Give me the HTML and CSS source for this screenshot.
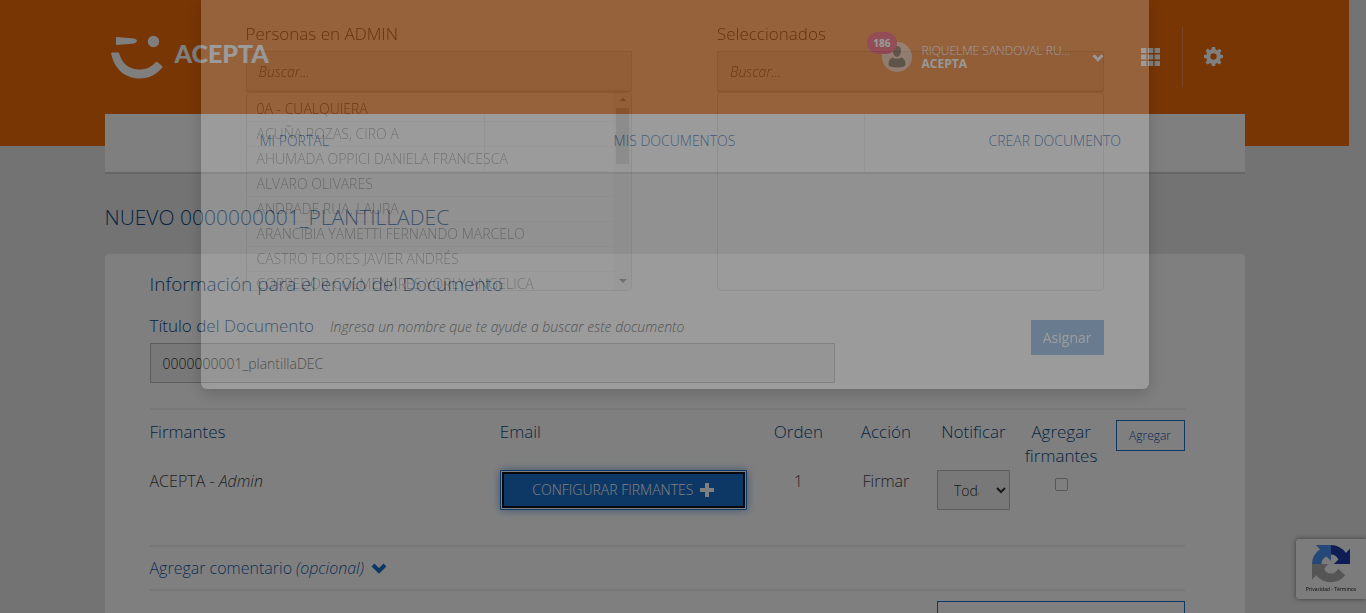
FILE: index.html
```html
<!DOCTYPE html>
<html lang="es">
<head>
<meta charset="utf-8">
<meta name="viewport" content="width=device-width, initial-scale=1">
<title>Nuevo documento - Acepta</title>
<link rel="stylesheet" href="styles.css">
</head>
<body>
<div class="page">
  <header class="banner">
    <div class="container banner-row">
      <a class="logo" href="#">
        <svg class="logo-mark" viewBox="0 0 52 44" aria-hidden="true">
          <path d="M6 2 Q5 2 5 3 V9 Q5 10 6 10 L23 8.400 Q26 7.500 26 6 Q26 4.200 23 3.500 Z"/>
          <circle cx="42.500" cy="6.500" r="5.700"/>
          <path d="M1 17.500 H7 Q8 17.500 8.200 18.600 C11 28.500 18 34.500 28 34.500 C35.500 34.500 40.500 31.600 44.400 27.400 Q45.500 26.300 46.700 27.300 L51 31 Q52 32 51 33 C45 39.700 38 43.500 29 43.500 C14 43.500 3.500 34 .2 19 Q0 17.500 1 17.500Z"/>
        </svg>
        <span>ACEPTA</span>
      </a>
      <div class="user">
        <div class="avatar">
          <svg viewBox="0 0 30 30" aria-hidden="true"><circle class="avatar-bg" cx="15" cy="15" r="15"/><path class="avatar-person" d="M15 4c2.800 0 4.200 2 4 5-.2 3-1.500 5.800-4 5.800S11.200 12 11 9c-.2-3 1.200-5 4-5zM10.500 15.500Q15 18 19.500 15.500 23.500 17 23.500 22.500 23.500 25.500 15 25.500 6.500 25.500 6.500 22.500 6.500 17 10.500 15.500z"/></svg>
          <span class="badge">186</span>
        </div>
        <div class="user-text"><div class="user-name">RIQUELME SANDOVAL RU...</div><div class="user-org">ACEPTA</div></div>
        <button class="icon-button user-toggle" aria-label="Menú de usuario"><svg viewBox="0 0 12 8"><path d="M1.500 1.200 6 5.700 10.500 1.200" fill="none" stroke="currentColor" stroke-width="3"/></svg></button>
      </div>
      <button class="icon-button apps" aria-label="Aplicaciones"><svg viewBox="0 0 19 18"><path fill="currentColor" d="M0 0h5.400v5H0zM6.800 0h5.400v5H6.800zM13.600 0H19v5h-5.400zM0 6.500h5.400v5H0zM6.800 6.500h5.400v5H6.800zM13.600 6.500H19v5h-5.400zM0 13h5.400v5H0zM6.800 13h5.400v5H6.800zM13.600 13H19v5h-5.400z"/></svg></button>
      <button class="icon-button settings" aria-label="Configuración"><svg viewBox="0 0 24 24"><path fill="currentColor" fill-rule="evenodd" d="M10 0h4l.7 3.400 2 .8L19.600 2.200l2.600 2.600-2 2.800.9 2.100L24.200 10v4l-3.200.6-.9 2 1.900 2.900-2.600 2.600-2.800-1.900-2 .9L14 24.200h-4l-.6-3.100-2-.9-2.900 1.900-2.600-2.600 1.900-2.900-.8-2L0 14v-4l3.100-.5.8-2L2 4.600 4.600 2l2.800 2 2-.8zM12 8a4 4 0 1 0 0 8 4 4 0 0 0 0-8z"/></svg></button>
    </div>
  </header>
  <main class="container">
    <nav class="main-nav">
      <a href="#">MI PORTAL</a><a href="#">MIS DOCUMENTOS</a><a href="#">CREAR DOCUMENTO</a>
    </nav>
    <h1>NUEVO 0000000001_PLANTILLADEC</h1>
    <form class="card">
      <h2>Información para el envío del Documento</h2>
      <div class="title-label"><label for="doc-title">Título del Documento</label><em>Ingresa un nombre que te ayude a buscar este documento</em></div>
      <input class="field doc-title" id="doc-title" type="text" value="0000000001_plantillaDEC">
      <section class="signers">
        <table>
          <colgroup><col class="col-name"><col class="col-email"><col><col><col><col><col></colgroup>
          <thead><tr><th class="left">Firmantes</th><th class="left">Email</th><th>Orden</th><th>Acción</th><th>Notificar</th><th id="add-head">Agregar firmantes</th><th><button type="button" class="add-button">Agregar</button></th></tr></thead>
          <tbody><tr><td class="left">ACEPTA - <em>Admin</em></td><td class="left"><button type="button" class="configure">CONFIGURAR FIRMANTES <svg viewBox="0 0 14 14" aria-hidden="true"><path fill="currentColor" d="M5 0h4v5h5v4H9v5H5V9H0V5h5z"/></svg></button></td><td>1</td><td>Firmar</td><td><select class="field notify" aria-label="Notificar"><option>Todas</option></select></td><td><input class="check" type="checkbox" aria-labelledby="add-head"></td><td></td></tr></tbody>
        </table>
      </section>
      <a class="comment" href="#">Agregar comentario <em>(opcional)</em><svg viewBox="0 0 16 11" aria-hidden="true"><path d="M2 2 8 8 14 2" fill="none" stroke="currentColor" stroke-width="4"/></svg></a>
      <div class="actions"><button type="button" class="outline-button" aria-label="Continuar"></button></div>
    </form>
  </main>
</div>
<aside class="captcha">
  <svg viewBox="0 0 64 64" aria-hidden="true">
    <path fill="#1c3aa9" d="M64 32V6.500l-7 7A31.500 31.500 0 0 0 32 0v16c6 0 9.500 2.500 12.500 8.500L37 32z"/>
    <path fill="#4a90f0" d="M32 0H6.500l7 7A31.500 31.500 0 0 0 0 32h16c0-6 2.500-9.500 8.500-12.500L32 27z"/>
    <path fill="#ababab" d="M0 32v26l7-7a31.500 31.500 0 0 0 49 0L44 40c-3 5-6 8-12 8-6 0-9-2.500-11.500-8L27 32z"/>
  </svg>
  <div><a href="#">Privacidad</a> - <a href="#">Términos</a></div>
</aside>
<div class="backdrop"></div>
<div class="modal-layer">
  <div class="modal" role="dialog" aria-label="Configurar firmantes">
    <div class="pickers">
      <div class="picker">
        <label for="people">Personas en ADMIN</label>
        <input id="people" type="text" placeholder="Buscar...">
        <div class="list">
          <ul><li>0A - CUALQUIERA</li><li>ACUÑA ROZAS, CIRO A</li><li>AHUMADA OPPICI DANIELA FRANCESCA</li><li>ALVARO OLIVARES</li><li>ANDRADE RUA, LAURA</li><li>ARANCIBIA YAMETTI FERNANDO MARCELO</li><li>CASTRO FLORES JAVIER ANDRÉS</li><li>CORREDOR COLMENARES YORLY ANGELICA</li></ul>
          <div class="scrollbar"><span class="arrow-up"></span><span class="thumb"></span><span class="arrow-down"></span></div>
        </div>
      </div>
      <div class="picker">
        <label for="chosen">Seleccionados</label>
        <input id="chosen" type="text" placeholder="Buscar...">
        <div class="list"><ul></ul></div>
      </div>
    </div>
    <button type="button" class="assign">Asignar</button>
  </div>
</div>
</body>
</html>
```
FILE: styles.css
```css
* { box-sizing: border-box; }
body {
  margin: 0;
  background: #e6e6e6;
  color: #333;
  font: 300 17px/24px "Open Sans", "Noto Sans", sans-serif;
  height: 100vh;
  overflow: hidden;
}
button, input, select { font: inherit; color: inherit; }
button { cursor: pointer; }
a { color: #1a5cab; text-decoration: none; }
.page { padding-right: 17px; height: 100vh; overflow: hidden; }
.container { max-width: 1140px; margin: 0 auto; }

.banner { background: #f26c0a; height: 146px; }
.banner-row { display: flex; align-items: center; height: 114px; color: #fff; }
.logo { display: flex; align-items: center; gap: 12px; margin: 0 auto 0 6px; color: #fff; font: 900 25px/34px Lato, "Open Sans", sans-serif; }
.logo-mark { width: 52px; height: 44px; fill: #fff; }
.logo span { padding-bottom: 8px; }
.user { display: flex; align-items: center; gap: 10px; width: 222px; }
.avatar { position: relative; width: 30px; height: 30px; }
.avatar svg { display: block; }
.avatar-bg { fill: #f0bb98; }
.avatar-person { fill: #70523a; }
.badge { position: absolute; right: 15px; top: -10px; padding: 0 6px; border-radius: 11px; background: #e83850; font: 700 10px/22px "Open Sans", sans-serif; }
.user-text { flex: 1; font-size: 12px; line-height: 13px; white-space: nowrap; }
.user-org { font-weight: 700; }
.icon-button { display: flex; align-items: center; justify-content: center; border: 0; padding: 0; background: none; color: #fff; }
.user-toggle { margin-left: auto; padding-top: 2px; }
.user-toggle svg { width: 12px; height: 8px; }
.apps { width: 63px; height: 60px; margin-left: 16px; border-right: 1px solid #f6894a; }
.apps svg { width: 19px; height: 18px; }
.settings { width: 62px; height: 60px; padding-bottom: 2px; }
.settings svg { width: 19px; height: 19px; }

.main-nav { display: flex; margin-top: -32px; background: #fff; border-bottom: 2px solid #ccc; }
.main-nav a { flex: 1; padding: 15px 0 19px; text-align: center; font-size: 14px; border-right: 1px solid #eee; }
.main-nav a:last-child { border-right: 0; }
h1 { margin: 28px 0 22px; font-weight: 300; font-size: 21px; line-height: 30px; color: #0b4a86; }
.card { min-height: 400px; padding: 18px 60px 30px 45px; background: #fff; border-radius: 4px; }
h2 { margin: 0 0 18px; font-weight: 300; font-size: 19px; line-height: 24px; color: #0b4a86; }
.title-label { display: flex; gap: 16px; height: 24px; color: #0b4a86; margin-bottom: 5px; }
.title-label em { font-size: 14px; line-height: 26px; color: #444; }
.field { height: 40px; border: 1px solid #bbb; border-radius: 0; background: #f0f0f0; font-size: 14px; color: #333; }
.doc-title { display: block; width: 685px; max-width: 100%; padding: 0 12px; }
.signers { margin-top: 25px; padding: 10px 0 33px; border-top: 2px solid #eee; border-bottom: 2px solid #eee; }
table { width: calc(100% + 16px); margin: 0 -8px; table-layout: fixed; border-collapse: collapse; }
.col-name { width: calc(100% / 3); }
.col-email { width: 25%; }
th, td { padding: 0 0 2px; vertical-align: top; text-align: center; font-weight: 300; }
th { color: #0b4a86; }
td { color: #444; font-size: 16px; line-height: 22px; }
.left { text-align: left; padding-left: 8px; }
th:last-child { text-align: right; padding-right: 8px; }
.add-button { display: block; margin-left: auto; width: 69px; height: 31px; padding: 0; border: 1px solid #1a70ca; background: #fff; color: #1a4fa8; font-size: 12px; }
.configure { display: flex; align-items: center; justify-content: center; gap: 7px; width: 247px; height: 40px; background: #1a70ca; color: #fff; border: 1px solid #1a70ca; border-radius: 1px; font-size: 14px; box-shadow: inset 0 0 0 1px #fff, inset 0 0 0 3px #101010, 0 0 8px #1a70ca99; }
.configure svg { width: 14px; height: 14px; }
.notify { width: 73px; padding: 0 14px 0 12px; }
.check { appearance: none; display: block; width: 13px; height: 13px; margin: 8px auto; border: 1px solid #b0b0b0; border-radius: 2px; }
.comment { display: flex; align-items: center; height: 44px; border-bottom: 2px solid #eee; font-size: 16px; }
.comment em { margin-left: 4px; }
.comment svg { width: 16px; height: 11px; margin-left: 7px; color: #1a70ca; }
.actions { display: flex; justify-content: flex-end; padding-top: 10px; }
.outline-button { width: 248px; height: 40px; background: #fff; border: 1px solid #1a70ca; }

.captcha { position: fixed; right: 0; bottom: 14px; width: 70px; height: 60px; padding: 6px 0 0; background: #f8f8f8; border-radius: 3px 0 0 3px; box-shadow: 0 0 5px #777; text-align: center; font: 400 5px/8px "Open Sans", sans-serif; }
.captcha svg { display: block; width: 38px; height: 38px; margin: 0 auto 2px; }
.captcha a { color: #111; }

.backdrop { position: fixed; inset: 0; background: #000; opacity: .5; }
.modal-layer { position: fixed; inset: 0; padding-right: 17px; opacity: .22; }
.modal { max-width: 948px; margin: 0 auto; padding: 22px 45px 34px; background: #fff; border-radius: 0 0 6px 6px; box-shadow: 0 5px 15px #000000cc; }
.pickers { display: flex; gap: 85px; }
.picker { flex: 1; }
.picker label { display: block; margin-bottom: 5px; color: #222; }
.picker input { display: block; width: 100%; height: 41px; padding: 0 12px; border: 1px solid #ccc; border-width: 1px 1px 2px; background: #eee; font-size: 14px; font-style: italic; }
.picker input::placeholder { color: #444; opacity: 1; }
.list { display: flex; height: 199px; border: 1px solid #ccc; border-radius: 4px; overflow: hidden; }
.list ul { flex: 1; margin: 0; padding: 4px 0 0; list-style: none; }
.list li { padding: 0 10px; font-size: 14px; line-height: 24px; border-bottom: 1px solid #eee; color: #444; white-space: nowrap; }
.scrollbar { display: flex; flex-direction: column; align-items: center; width: 17px; padding: 5px 0 7px; background: #f0f0f0; }
.arrow-up { border: 3px solid transparent; border-top: 0; border-bottom-color: #777; }
.arrow-down { margin-top: auto; border: 4px solid transparent; border-bottom: 0; border-top-color: #333; }
.thumb { width: 13px; height: 56px; margin-top: 7px; background: #bbb; }
.assign { display: block; height: 35px; margin: 29px 0 0 auto; padding: 0 12px; border: 0; background: #1a70ca; color: #fff; font-size: 14px; font-weight: 400; }
```
